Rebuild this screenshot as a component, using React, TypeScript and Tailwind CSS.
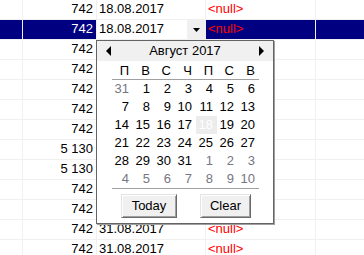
import React from "react";

type Row = { n: string; d?: string; v?: string; sel?: boolean };

const rows: Row[] = [
  { n: "742", d: "18.08.2017", v: "<null>" },
  { n: "742", d: "18.08.2017", v: "<null>", sel: true },
  { n: "742" },
  { n: "742" },
  { n: "742" },
  { n: "742" },
  { n: "742" },
  { n: "5 130" },
  { n: "5 130" },
  { n: "742" },
  { n: "742" },
  { n: "742", d: "31.08.2017", v: "<null>" },
  { n: "742", d: "31.08.2017", v: "<null>" },
];

const weekDays = ["П", "В", "С", "Ч", "П", "С", "В"];

// August 2017, weeks starting on Monday
const days: { day: number; other?: boolean }[] = [
  { day: 31, other: true },
  ...Array.from({ length: 31 }, (_, i) => ({ day: i + 1 })),
  ...Array.from({ length: 10 }, (_, i) => ({ day: i + 1, other: true })),
];

function Calendar() {
  return (
    <div className="absolute left-[96px] top-[40px] w-[178px] h-[184px] bg-white border border-[#646464] shadow-[1px_1px_0_#a0a0a0]">
      <div className="flex items-center h-[20px] bg-[#f0f0f0] leading-[20px]">
        <svg width="5" height="10" viewBox="0 0 5 10" className="ml-[9px]">
          <polygon points="5,0 0,5 5,10" fill="#000" />
        </svg>
        <div className="flex-1 text-center text-black">Август 2017</div>
        <svg width="5" height="10" viewBox="0 0 5 10" className="mr-[9px]">
          <polygon points="0,0 5,5 0,10" fill="#000" />
        </svg>
      </div>

      <div className="ml-[15px] w-[147px] h-[19px] pt-[1px] grid grid-cols-7 leading-[18px] border-b border-[#a0a0a0]">
        {weekDays.map((w, i) => (
          <div key={i} className="text-right pr-[4px] text-black">{w}</div>
        ))}
      </div>

      <div className="ml-[15px] w-[147px] grid grid-cols-7 border-b border-[#a0a0a0]">
        {days.map((d, i) => {
          const today = !d.other && d.day === 18;
          return (
            <div
              key={i}
              className={`h-[18px] leading-[18px] text-right pr-[4px] ${
                today ? "bg-[#ececec] text-white" : d.other ? "text-[#767682]" : "text-black"
              }`}
            >
              {d.day}
            </div>
          );
        })}
      </div>

      <div className="flex gap-[23px] ml-[24px] mt-[5px]">
        <button className="w-[56px] h-[24px] bg-[#f0f0f0] border border-t-[#e3e3e3] border-l-[#e3e3e3] border-r-[#696969] border-b-[#696969] shadow-[inset_1px_1px_0_#fff,inset_-1px_-1px_0_#a0a0a0] text-black leading-[20px]">
          Today
        </button>
        <button className="w-[51px] h-[24px] bg-[#f0f0f0] border border-t-[#e3e3e3] border-l-[#e3e3e3] border-r-[#696969] border-b-[#696969] shadow-[inset_1px_1px_0_#fff,inset_-1px_-1px_0_#a0a0a0] text-black leading-[20px]">
          Clear
        </button>
      </div>
    </div>
  );
}

export default function App() {
  return (
    <div className="relative w-[364px] h-[255px] overflow-hidden bg-white font-['Liberation_Sans',Arial,sans-serif] text-[13px]">
      <div className="flex flex-col">
        {rows.map((r, i) => {
          const bg = r.sel ? "bg-[#000080]" : "bg-white";
          return (
            <div key={i} className="flex h-[20px] shrink-0 border-b border-[#f0f0f0] leading-[18px]">
              <div className={`w-[23px] border-r border-[#f0f0f0] ${bg}`} />
              <div className={`w-[74px] border-r border-[#f0f0f0] text-right pr-[3px] ${bg} ${r.sel ? "text-white" : "text-black"}`}>
                {r.n}
              </div>
              <div className="w-[109px] flex border-r border-[#f0f0f0] bg-white text-black">
                <span className="pl-[2px]">{r.d}</span>
                {r.sel && (
                  <div className="ml-auto w-[18px] bg-[#f0f0f0] flex items-center justify-center">
                    <svg width="7" height="4" viewBox="0 0 7 4" className="mt-[1px]">
                      <polygon points="0,0 7,0 3.5,4" fill="#000" />
                    </svg>
                  </div>
                )}
              </div>
              <div className={`w-[110px] border-r border-[#f0f0f0] pl-[2px] text-[#ff0000] ${bg}`}>
                {r.v}
              </div>
              <div className={`flex-1 ${bg}`} />
            </div>
          );
        })}
      </div>
      <Calendar />
    </div>
  );
}
